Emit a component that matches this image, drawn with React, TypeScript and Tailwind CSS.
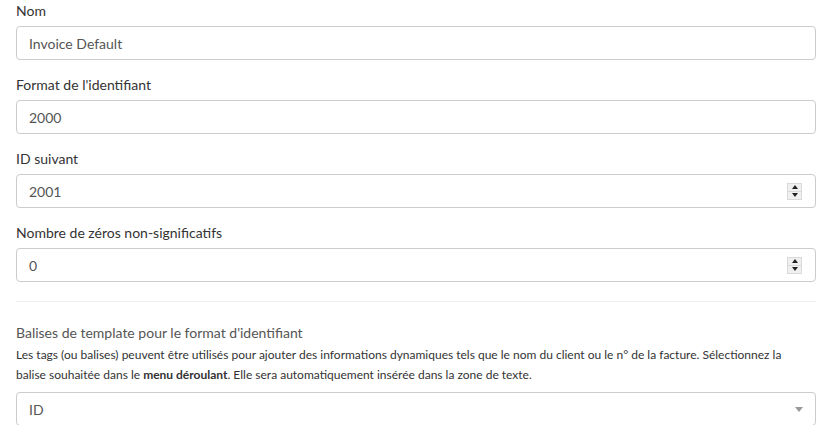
function Label({ children, className = "mb-[5px]" }: { children: React.ReactNode; className?: string }) {
  return <label className={`block text-[14px] leading-[21px] text-[#333] ${className}`}>{children}</label>;
}

function Spinner() {
  return (
    <div className="flex flex-col w-[15px] h-[17px] border border-[#d9d9d9] bg-[#f0f0f0]">
      <div className="flex-1 flex items-center justify-center border-b border-[#d9d9d9]">
        <div className="w-0 h-0 border-x-[3.5px] border-x-transparent border-b-[4px] border-b-[#222]" />
      </div>
      <div className="flex-1 flex items-center justify-center">
        <div className="w-0 h-0 border-x-[3.5px] border-x-transparent border-t-[4px] border-t-[#222]" />
      </div>
    </div>
  );
}

function Field({ label, value, spin }: { label: string; value: string; spin?: boolean }) {
  return (
    <div className="mb-[14px]">
      <Label>{label}</Label>
      <div className="h-[34px] border border-[#ccc] rounded-[4px] flex items-center pl-[12px] pr-[13px] text-[14px] text-[#555]">
        <span className="flex-1">{value}</span>
        {spin && <Spinner />}
      </div>
    </div>
  );
}

export default function App() {
  return (
    <div className="w-[832px] h-[425px] overflow-hidden bg-white px-[16px] font-['Segoe_UI','Lato',sans-serif]">
      <div className="w-[800px]">
        <Field label="Nom" value="Invoice Default" />
        <Field label="Format de l'identifiant" value="2000" />
        <Field label="ID suivant" value="2001" spin />
        <Field label="Nombre de zéros non-significatifs" value="0" spin />
        <hr className="mt-[19px] mb-[20px] border-t border-[#eee]" />
        <Label className="mb-[2px]">
          <span className="text-[#555]">Balises de template pour le format d'identifiant</span>
        </Label>
        <p className="max-w-[785px] text-[12px] leading-[20px] text-[#333] mb-[7px]">
          Les tags (ou balises) peuvent être utilisés pour ajouter des informations dynamiques tels que le nom du client ou le n° de la facture. Sélectionnez la balise souhaitée dans le <b>menu déroulant</b>. Elle sera automatiquement insérée dans la zone de texte.
        </p>
        <div className="h-[34px] border border-[#ccc] rounded-[4px] flex items-center pl-[12px] pr-[12px] text-[14px] text-[#555]">
          <span className="flex-1">ID</span>
          <div className="w-0 h-0 border-x-[4px] border-x-transparent border-t-[5px] border-t-[#999]" />
        </div>
      </div>
    </div>
  );
}
